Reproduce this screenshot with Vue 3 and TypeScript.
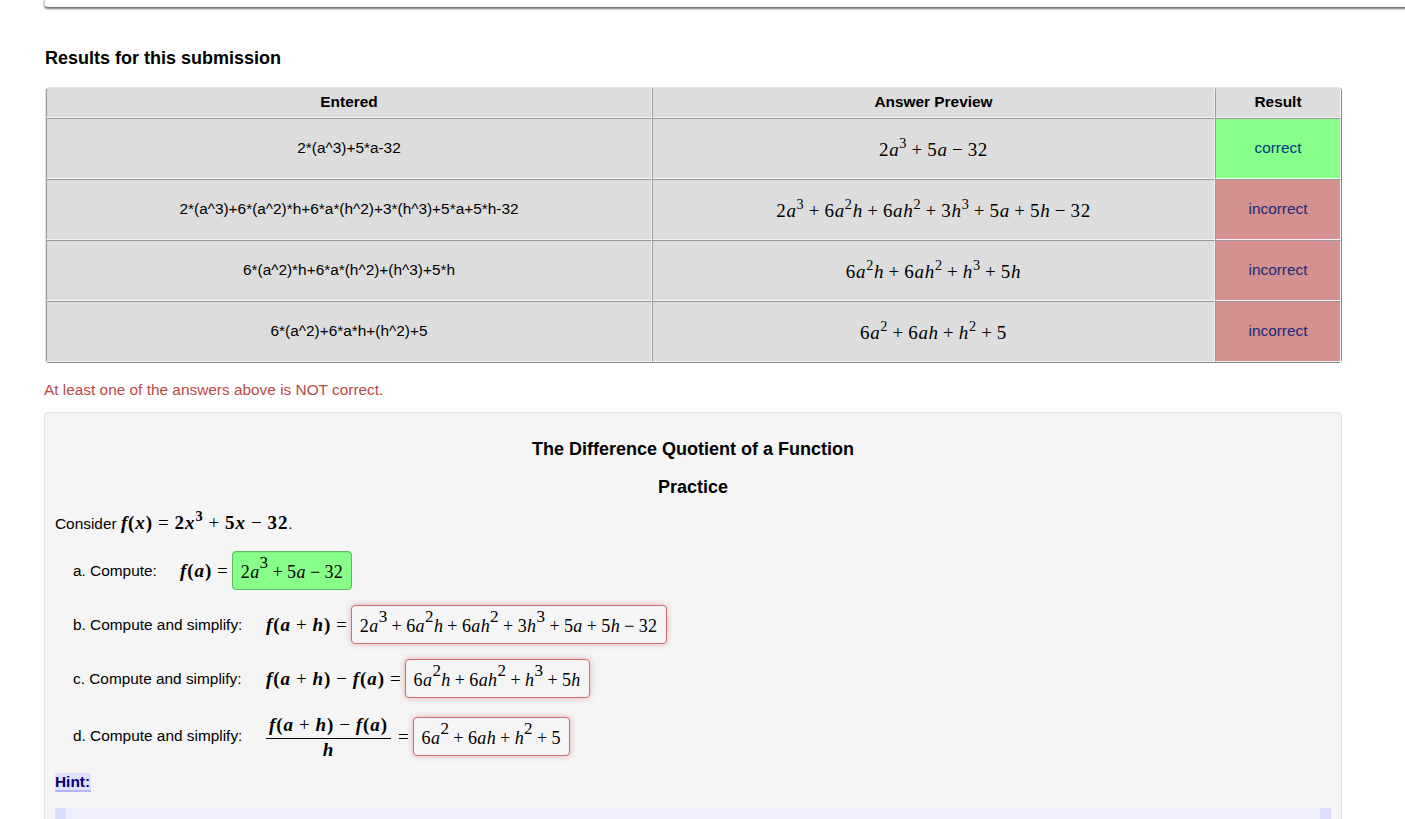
<script setup lang="ts">
import { defineComponent, h } from 'vue'

type ResultRow = { entered: string; preview: string; correct: boolean }

const rows: ResultRow[] = [
  { entered: '2*(a^3)+5*a-32', preview: '2a^3+5a-32', correct: true },
  { entered: '2*(a^3)+6*(a^2)*h+6*a*(h^2)+3*(h^3)+5*a+5*h-32', preview: '2a^3+6a^2h+6ah^2+3h^3+5a+5h-32', correct: false },
  { entered: '6*(a^2)*h+6*a*(h^2)+(h^3)+5*h', preview: '6a^2h+6ah^2+h^3+5h', correct: false },
  { entered: '6*(a^2)+6*a*h+(h^2)+5', preview: '6a^2+6ah+h^2+5', correct: false }
]

// small typesetter: letters italic, operators spaced, ^x raised
const MathText = defineComponent({
  props: { tex: { type: String, required: true } },
  setup(props) {
    return () => {
      const out: ReturnType<typeof h>[] = []
      const src = props.tex
      for (let i = 0; i < src.length; i += 1) {
        const c = src[i]
        if (c === '^') {
          i += 1
          out.push(h('sup', { class: 'm-sup' }, src[i]))
        } else if (c === '+' || c === '-' || c === '=') {
          out.push(h('span', { class: 'm-op' }, c === '-' ? '\u2212' : c))
        } else if (/[a-z]/.test(c)) {
          out.push(h('i', { class: 'm-var' }, c))
        } else {
          out.push(h('span', c))
        }
      }
      return h('span', { class: 'm' }, out)
    }
  }
})
</script>

<template>
  <main class="page">
    <div class="top-card"></div>

    <h3 class="results-title">Results for this submission</h3>

    <table class="results">
      <thead>
        <tr>
          <th class="col-entered">Entered</th>
          <th class="col-preview">Answer Preview</th>
          <th class="col-result">Result</th>
        </tr>
      </thead>
      <tbody>
        <tr v-for="row in rows" :key="row.entered">
          <td>{{ row.entered }}</td>
          <td class="preview"><MathText :tex="row.preview" /></td>
          <td :class="row.correct ? 'ok' : 'bad'">{{ row.correct ? 'correct' : 'incorrect' }}</td>
        </tr>
      </tbody>
    </table>

    <p class="warning">At least one of the answers above is NOT correct.</p>

    <section class="problem">
      <h4 class="problem-title">The Difference Quotient of a Function</h4>
      <h4 class="problem-sub">Practice</h4>

      <p class="consider">Consider <span class="bold-math"><MathText tex="f(x)=2x^3+5x-32" /></span>.</p>

      <div class="part part-a">
        <span class="label">a. Compute:</span>
        <span class="bold-math"><MathText tex="f(a)=" /></span>
        <span class="answer green"><MathText tex="2a^3+5a-32" /></span>
      </div>
      <div class="part part-b">
        <span class="label">b. Compute and simplify:</span>
        <span class="bold-math"><MathText tex="f(a+h)=" /></span>
        <span class="answer red"><MathText tex="2a^3+6a^2h+6ah^2+3h^3+5a+5h-32" /></span>
      </div>
      <div class="part part-c">
        <span class="label">c. Compute and simplify:</span>
        <span class="bold-math"><MathText tex="f(a+h)-f(a)=" /></span>
        <span class="answer red"><MathText tex="6a^2h+6ah^2+h^3+5h" /></span>
      </div>
      <div class="part part-d">
        <span class="label">d. Compute and simplify:</span>
        <span class="frac bold-math">
          <span class="num"><MathText tex="f(a+h)-f(a)" /></span>
          <span class="den"><MathText tex="h" /></span>
        </span>
        <span class="bold-math eq"><MathText tex="=" /></span>
        <span class="answer red"><MathText tex="6a^2+6ah+h^2+5" /></span>
      </div>

      <div class="hint-row"><span class="hint">Hint:</span></div>
      <div class="hint-box"></div>
    </section>
  </main>
</template>

<style>
html, body { height: 100%; overflow: hidden; background: #fff; }
</style>

<style scoped>
.page {
  padding-left: 44px;
  width: 1298px;
  font-family: "Liberation Sans", Arial, sans-serif;
  font-size: 15.4px;
  color: #000;
}
.m { white-space: nowrap; font-family: "Liberation Serif", "DejaVu Serif", serif; }
.m :deep(.m-var) { font-style: italic; }
.m :deep(.m-op) { margin: 0 4.3px; }
.m :deep(.m-sup) { font-size: 75%; line-height: 0; vertical-align: 0.55em; font-style: normal; }
.top-card {
  height: 8px;
  width: 1400px;
  box-sizing: border-box;
  background: #fff;
  border: 1px solid #ccc;
  border-top: 0;
  border-bottom: 1px solid #777;
  border-radius: 0 0 4px 4px;
  box-shadow: 0 1px 2px rgba(0, 0, 0, 0.55);
}
.results-title {
  margin: 39px 0 0 1px;
  font-size: 18px;
  line-height: 22px;
  font-weight: 700;
}
.results {
  margin: 18px 0 0 1px;
  width: 1297px;
  table-layout: fixed;
  border-collapse: separate;
  border-spacing: 0;
  border: 1px solid #e4e4e4;
  border-right: 1px solid #888;
  border-bottom: 1px solid #888;
  border-radius: 4px;
  box-sizing: border-box;
}
.col-entered { width: 606px; }
.col-preview { width: 563px; }
th, td {
  background: #ddd;
  text-align: center;
  border-left: 1px solid #999;
  border-right: 1px solid #f4f4f4;
  border-top: 1px solid #999;
  border-bottom: 1px solid #f4f4f4;
  padding: 0;
  box-sizing: border-box;
}
th {
  height: 30px;
  font-weight: 700;
  font-size: 15.4px;
  padding-bottom: 3px;
  border-top-color: #ddd;
}
td { height: 61px; padding-bottom: 1px; }
th:last-child, td:last-child { border-right-color: #fff; }
thead th:first-child { border-top-left-radius: 3px; }
thead th:last-child { border-top-right-radius: 3px; }
.preview { font-size: 19px; padding: 2px 0 0; letter-spacing: 0.7px; }
.ok { background: #8f8; color: #00387f; }
.bad { background: #d59090; color: #1c2a78; }
.warning {
  margin: 18px 0 0;
  line-height: 18px;
  color: #b94a48;
}
.problem {
  margin-top: 13px;
  height: 500px;
  box-sizing: border-box;
  background: #f5f5f5;
  border: 1px solid #e3e3e3;
  border-radius: 4px;
  padding: 0 10px 0 10px;
}
.problem-title, .problem-sub {
  margin: 0;
  text-align: center;
  font-size: 18px;
  line-height: 22px;
  font-weight: 700;
}
.problem-title { padding-top: 25px; }
.problem-sub { padding-top: 16px; }
.consider {
  margin: 13px 0 0;
  line-height: 24px;
}
.part {
  display: flex;
  align-items: center;
  margin-left: 18px;
}
.part-a { margin-top: 15px; height: 39px; }
.part-b { margin-top: 15px; height: 39px; }
.part-c { margin-top: 15px; height: 39px; }
.part-d { margin-top: 15px; height: 47px; }
.label { width: 193px; flex: none; }
.part-a .label { width: 107px; }
.part-d .label { padding-bottom: 2px; }
.answer {
  display: inline-flex;
  align-items: center;
  box-sizing: border-box;
  height: 39px;
  padding: 3px 8px 0;
  border-radius: 4px;
  font-size: 18px;
  letter-spacing: 0.4px;
  margin-left: -2px;
}
.answer :deep(.m-op) { margin: 0 4px; }
.answer :deep(.m-sup) { font-size: 95%; vertical-align: 0.6em; }
.green {
  background: #8f8;
  border: 1px solid #5cb85c;
  box-shadow: inset 0 1px 1px rgba(0, 0, 0, 0.075);
}
.red {
  background: #f5f5f5;
  border: 1px solid #cc6e6e;
  box-shadow: 0 0 6px rgba(204, 90, 90, 0.45);
}
.bold-math { font-size: 19px; font-weight: 700; letter-spacing: 0.9px; }
.bold-math :deep(.m-op) { margin: 0 5px; font-weight: 400; }
.frac {
  display: inline-flex;
  flex-direction: column;
  align-items: center;
}
.num { padding: 0 3px 2px; border-bottom: 1.5px solid #000; line-height: 22px; }
.den { line-height: 21px; }
.eq { margin-left: 2px; }
.hint-row { margin-top: 13px; line-height: 18px; }
.hint {
  font-weight: 700;
  color: #00006f;
  background: #e0e0ff;
  border-bottom: 2px solid #b4b4ff;
  border-radius: 2px 2px 0 0;
  padding: 0 1px 0 0;
}
.hint-box {
  margin-top: 17px;
  height: 200px;
  background: #eef;
  border-left: 11px solid #ddf;
  border-right: 11px solid #ddf;
}
</style>
